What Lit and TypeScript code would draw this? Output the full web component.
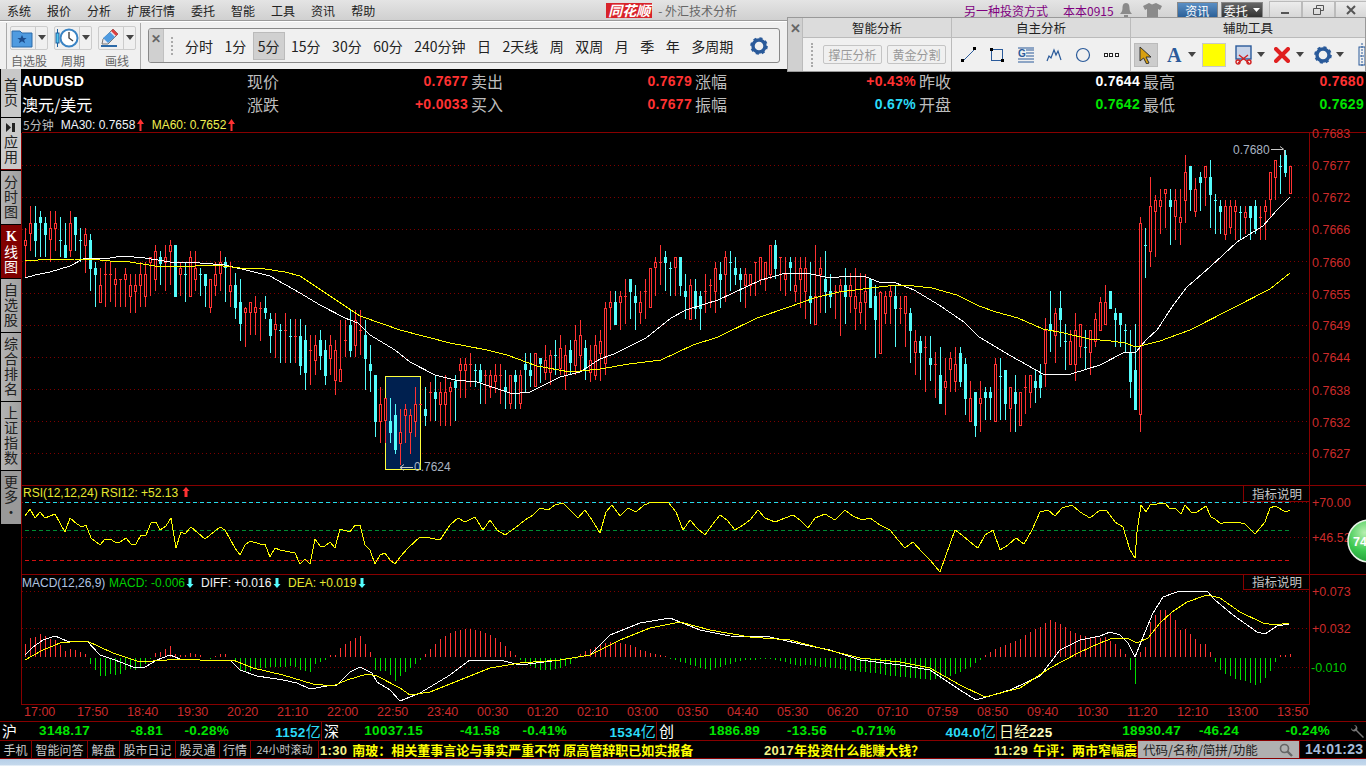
import { LitElement, css, html, svg } from 'lit';
import { customElement } from 'lit/decorators.js';

type Candle = { i: number; hi: number; lo: number; top: number; bot: number; up: boolean };

// rows are "high low bodyTop bodyBottom colour", scale 3 means read from a 3x crop
function rows(start: number, y0: number, scale: number, text: string): Candle[] {
    return text.trim().split('\n').map((line, n) => {
        const p = line.trim().split(/\s+/);
        const y = (k: number) => y0 + Number(p[k]) / scale;
        return { i: start + n, hi: y(0), lo: y(1), top: y(2), bot: y(3), up: p[4] === 'r' };
    });
}

const candles: Candle[] = [
    ...rows(0, 130, 3, `
295 445 330 345 r
228 363 280 310 r
228 380 280 330 c
243 380 262 278 c
262 380 280 312 c
243 395 295 328 r
243 362 280 295 r
262 380 330 330 c
280 380 345 380 c
243 380 280 362 r
262 362 262 312 c
295 395 330 330 c
295 430 312 345 r
312 482 330 413 c
397 532 413 430 c
413 515 465 515 r
397 532 432 432 r
397 515 432 432 r
415 532 448 464 r
448 532 448 448 r
415 532 432 446 r
432 548 465 497 r
432 548 465 482 r
397 532 432 464 r
397 532 432 497 r
380 497 380 395 r
345 482 363 446 r
363 465 380 397 c
345 482 380 395 r
330 465 345 362 r
345 497 345 497 c
397 497 413 430 r
397 515 432 432 c
363 497 380 497 r
363 482 413 446 r
413 497 432 432 c
432 532 432 465 c
448 548 448 532 r
397 497 432 464 r
363 482 397 430 r
380 515 397 413 c
397 532 465 482 r
430 566 465 532 c
448 632 517 581 c
532 650 535 548 r
515 616 517 548 r
498 616 532 548 r
515 632 535 535 r
498 566 535 548 c
550 668 568 616 c
550 683 583 598 r
583 700 600 600 c
550 700 600 600 r
567 700 618 618 c
567 700 618 618 r`),
    ...rows(55, 0, 1, `
319 375 336 365 c
325 390 340 372 c
335 385 350 350 r
335 375 345 360 r
330 370 340 355 c
340 385 350 375 c
335 375 345 358 r
340 395 350 380 r
320 381 369 381 r
320 357 340 340 r
310 357 325 350 c
310 357 320 345 r
310 355 330 330 r
320 390 335 358 c
345 392 364 370 c`),
    ...rows(70, 350, 3, `
75 262 75 212 c
112 280 162 212 r
145 280 145 212 r
145 280 212 246 c
162 312 195 297 c
178 345 246 278 r
162 280 178 195 r
178 312 195 246 r
112 262 162 212 r
162 162 162 162 r
112 228 178 195 c
95 212 127 127 r
75 212 127 145 c
95 228 127 162 r
75 228 127 162 r
95 228 112 125 r
75 212 92 110 c
25 145 42 60 r
25 145 42 60 r
10 112 42 42 r
42 112 60 60 c
42 162 60 92 c
60 162 75 75 r
60 145 75 110 r
42 128 75 92 r
42 162 75 75 r
60 178 112 125 c
75 178 75 160 r
60 178 75 92 c
60 178 75 160 r
10 125 42 58 c
10 112 60 75 c
10 112 10 110 r
25 100 25 40 c`),
    ...rows(104, 0, 1, `
345 380 360 372 r
350 385 355 372 r
340 375 355 355 c
335 375 348 368 r
345 390 355 375 r
340 375 350 362 c
325 375 340 365 r
320 370 335 355 r
340 380 348 368 c
345 382 360 372 r
335 380 345 375 r`),
    ...rows(115, 230, 3, `
300 453 333 368 r
215 435 235 400 r
183 300 217 233 r
183 283 217 283 c
183 300 198 215 r
148 283 198 198 r
148 267 148 183 c
165 300 198 215 c
183 283 217 248 r
148 267 183 183 r
113 233 115 233 r
80 198 97 113 r
45 165 97 97 r
62 183 82 97 c
97 198 115 115 c
82 198 82 113 r
82 198 82 165 c
133 267 183 198 c
148 267 165 267 r
148 267 183 233 c
183 300 198 233 c
133 250 183 183 r
148 233 165 165 r
97 250 115 183 r
97 233 133 148 c
62 217 82 133 r
62 183 97 97 c
80 165 115 133 c
115 217 133 148 c
115 233 133 165 r
133 198 133 165 r
97 198 97 97 r
82 165 82 148 r
97 183 97 148 r
45 148 45 133 r
30 148 45 115 c
82 183 82 82 r
82 198 133 148 r
82 183 97 113 c
82 217 165 183 r
82 233 115 148 r
82 267 115 183 r
97 283 198 215 c
45 283 198 283 r
82 250 115 133 r
62 250 148 183 c
133 233 183 198 c
165 267 183 183 r
148 318 165 183 r
115 283 165 198 c
130 250 165 198 r
115 300 198 233 r
130 283 217 248 r
133 300 183 215 r
148 233 148 233 c
165 383 198 267 c
183 300 185 367 r
183 283 198 248 r
165 283 183 198 r
165 350 198 233 c
198 283 233 233 r
198 350 198 250 r
233 400 250 300 c
300 435 333 367 r
318 450 333 367 c
318 485 352 352 r
318 453 383 400 c
367 503 402 402 r
350 520 435 520 c
383 555 453 470 r
367 487 385 418 r
350 487 402 452 r
350 470 368 452 c
385 555 402 503 c
453 573 505 573 r
487 622 487 587 c
453 605 505 520 r
470 570 487 503 c
470 570 487 503 c
385 573 402 573 r
385 570 437 437 c
420 570 420 520 c
470 605 472 535 r
435 605 487 520 c
487 587 487 587 r
435 553 470 470 r
435 535 435 485 r
420 520 453 470 c
402 503 435 470 c
265 470 300 400 r
183 367 283 300 c
235 400 250 317 r
183 350 235 267 c
283 420 333 333 c
300 400 333 402 r
250 453 300 402 r
283 385 283 350 r
300 420 352 352 c
300 435 300 367 r
250 350 267 333 r
200 300 217 300 r
165 283 217 283 r
183 235 183 233 c
235 350 250 267 c
250 350 250 283 c
283 367 300 300 c
300 503 367 453 c
283 537 420 537 c`),
    ...rows(223, 130, 3, `
262 906 280 852 r
295 445 345 345 c
142 412 228 362 r
195 380 211 243 r
178 312 211 228 r
178 295 178 190 r
178 345 211 228 c
178 330 211 260 r
178 345 262 278 r
75 278 127 210 r
108 243 108 178 c
145 262 178 243 r
127 243 142 158 c
108 228 108 142 r
90 295 142 192 c
192 312 211 211 c
211 312 228 243 c
211 330 228 312 r
211 312 228 292 r
211 330 228 243 r
228 330 245 245 c
228 312 245 260 r
228 330 228 260 c
211 312 228 293 c
228 330 262 262 r
211 330 228 243 r
127 262 127 208 r
90 210 90 140 r
75 192 108 108 c
60 140 75 125 c
108 192 108 190 r`),
];

const ma30 = '25,278 35,275 50,272 70,266 85,258 110,258 123,256 145,258 170,262 200,263 225,265 250,271 270,276 300,293 320,305 345,318 358,323 370,335 395,350 410,362 435,375 455,380 477,382 510,393 520,393 530,392 540,387 560,377 580,372 600,359 614,354 646,338 671,318 686,310 718,300 761,280 786,273 807,273 829,278 850,276 866,277 879,282 896,283 914,290 939,305 964,322 979,337 1011,356 1043,374 1071,374 1100,365 1125,352 1136,352 1146,340 1157,330 1172,307 1187,287 1210,267 1237,242 1263,226 1277,210 1290,197';
const ma60 = '25,261 38,260 75,259 90,259 110,261 130,262 155,266 175,267 215,265 240,268 265,269 285,272 300,276 330,296 360,316 400,330 450,343 487,350 507,355 537,366 570,372 600,369 629,364 661,360 693,345 718,337 757,318 789,307 814,298 839,292 871,288 896,285 914,286 932,288 957,295 979,306 996,312 1018,318 1043,329 1064,333 1089,339 1111,341 1125,343 1136,347 1160,341 1190,330 1233,308 1270,289 1290,273';
const rsi = '25,516 30,509 35,518 40,512 45,518 55,514 65,532 70,518 77,524 82,527 86,525 91,538 100,545 105,539 110,539 115,542 120,542 126,538 131,544 136,544 141,535 146,535 151,523 156,522 160,530 166,526 171,518 176,548 181,532 185,534 191,527 205,539 220,527 225,530 235,548 240,555 245,545 250,541 260,544 265,544 270,557 275,548 280,550 295,553 300,564 305,559 310,564 315,539 320,546 325,546 330,542 335,548 340,529 350,532 355,525 360,525 365,545 370,550 375,564 380,555 385,553 390,560 395,564 400,557 408,548 420,537 430,538 440,540 450,525 458,518 465,522 475,517 483,530 490,520 497,530 505,535 515,528 525,520 533,515 540,508 548,510 555,505 563,503 570,510 578,518 585,510 592,520 600,533 606,512 612,505 620,516 628,508 636,512 644,505 652,502 668,502 676,512 683,530 690,520 697,528 705,535 712,525 720,515 727,520 735,530 743,525 750,520 758,510 765,518 775,522 785,518 793,515 800,520 808,528 815,518 825,514 835,520 845,510 853,516 862,520 870,518 880,525 890,530 898,540 905,548 913,542 922,552 930,560 940,572 946,555 955,530 962,535 970,542 978,548 985,535 993,530 1000,550 1008,545 1016,538 1024,544 1032,530 1040,512 1048,510 1055,516 1062,508 1072,505 1080,512 1090,518 1100,510 1107,511 1115,522 1123,527 1130,550 1135,558 1137,532 1141,505 1146,512 1150,505 1165,503 1170,509 1175,508 1181,514 1185,505 1191,512 1197,512 1206,506 1211,517 1215,519 1221,524 1225,522 1237,522 1245,524 1255,534 1265,522 1270,508 1275,506 1286,512 1290,510';
const diff = '25,655 33,647 43,640 55,636 67,641 78,641 87,641 100,655 115,660 133,667 145,667 157,660 170,655 180,659 193,659 207,661 230,660 240,670 257,676 283,680 297,683 310,689 327,686 337,685 350,672 360,667 372,673 377,682 390,690 400,701 420,693 450,675 470,660 500,660 520,665 560,660 590,655 610,635 640,623 670,618 700,630 730,636 770,637 800,644 830,650 860,660 900,665 930,670 960,690 976,700 1010,690 1040,676 1060,650 1080,640 1100,636 1110,632 1120,635 1128,643 1135,657 1143,637 1153,613 1163,597 1177,592 1183,591 1207,591 1215,600 1233,615 1257,632 1265,634 1277,626 1289,624';
const dea = '25,660 43,650 60,643 80,641 87,641 113,653 140,662 167,660 187,659 213,661 233,660 253,668 283,675 313,684 333,686 347,680 367,674 377,676 400,688 410,695 430,692 460,680 490,668 520,663 560,660 590,655 620,640 650,628 680,622 710,630 750,637 790,640 820,648 860,658 900,662 930,668 960,685 985,697 1020,688 1050,668 1080,652 1100,643 1113,638 1127,638 1137,643 1148,638 1160,623 1172,612 1187,602 1207,595 1220,598 1240,612 1263,623 1275,625 1289,623';

// macd bars, [x, height above the baseline] and linear in between
const barKeys = [[25,13],[30,19],[35,20],[40,23],[45,21],[50,18],[55,17],[60,12],[65,6],[70,8],[75,7],[80,5],[85,3],[89,1],[90,-6],[95,-12],[100,-18],[105,-18],[110,-16],[115,-17],[120,-16],[125,-12],[130,-11],[135,-12],[140,-9],[145,-6],[150,-1],[155,4],[160,5],[165,8],[170,11],[175,3],[180,2],[185,2],[190,4],[195,3],[200,2],[205,0],[210,-1],[220,3],[225,3],[230,0],[235,-4],[240,-13],[245,-14],[250,-13],[255,-10],[285,-9],[290,-8],[295,-9],[300,-12],[305,-13],[310,-14],[315,-6],[320,-4],[325,-2],[330,2],[335,2],[340,9],[345,13],[350,16],[355,19],[360,21],[365,13],[370,5],[375,-12],[380,-13],[385,-13],[390,-17],[395,-23],[400,-18],[410,-10],[420,-2],[430,8],[440,18],[450,24],[460,27],[470,28],[480,26],[490,22],[500,15],[510,6],[520,-2],[530,-8],[540,-12],[550,-12],[560,-10],[570,-6],[580,3],[590,8],[600,12],[610,15],[620,14],[630,12],[640,7],[650,4],[660,2],[670,-1],[680,-4],[690,-7],[700,-10],[710,-12],[720,-9],[730,-6],[740,-3],[750,-2],[770,-1],[780,-3],[790,-6],[800,-8],[810,-7],[820,-9],[830,-10],[840,-11],[850,-13],[860,-14],[870,-15],[880,-16],[890,-18],[900,-19],[910,-20],[920,-21],[930,-22],[940,-21],[950,-18],[960,-14],[970,-9],[980,-2],[990,5],[1000,10],[1010,14],[1020,18],[1030,25],[1040,30],[1050,37],[1060,33],[1070,26],[1080,22],[1090,20],[1100,19],[1105,20],[1110,16],[1115,13],[1120,8],[1125,3],[1130,-12],[1135,-26],[1140,5],[1145,10],[1150,35],[1155,42],[1160,47],[1165,47],[1170,43],[1175,37],[1180,27],[1185,28],[1190,23],[1195,18],[1200,13],[1205,13],[1210,5],[1215,-4],[1220,-12],[1225,-16],[1230,-18],[1235,-21],[1240,-22],[1245,-23],[1250,-25],[1255,-27],[1260,-25],[1265,-20],[1270,-13],[1275,-4],[1280,2],[1285,2],[1290,3]];

function barAt(x: number) {
    for (let k = 1; k < barKeys.length; k++) {
        const [x0, v0] = barKeys[k - 1];
        const [x1, v1] = barKeys[k];
        if (x <= x1) return v0 + ((v1 - v0) * (x - x0)) / (x1 - x0);
    }
    return 0;
}

const RED = '#ff3232';
const CYAN = '#54fcfc';
const arrow = (x: number, y: number, color: string, up: boolean) => svg`
    <path d=${up ? `M${x} ${y - 6}l3.5 4h-2v6h-3v-6h-2z` : `M${x} ${y + 5}l3.5 -4h-2v-6h-3v6h-2z`} fill=${color}></path>`;

const priceAxis = [['0.7683', 133], ['0.7677', 165], ['0.7672', 197], ['0.7666', 229], ['0.7660', 262], ['0.7655', 294], ['0.7649', 325], ['0.7644', 357], ['0.7638', 390], ['0.7632', 422], ['0.7627', 453]] as const;
const grid = [165, 197, 229, 261, 293, 325, 357, 389, 421, 453, 502, 537, 591, 628, 667];

@customElement('kline-chart')
export class KlineChart extends LitElement {
    static override styles = css`
        :host { display: block; height: 572px; }
        svg { display: block; overflow: visible; }
        text { font-family: "Liberation Sans", Arial, sans-serif; font-size: 12px; }
        .axis { font-size: 12.5px; fill: #cc2b2b; }
        .note { fill: #a9b4c2; }
        .cjk { font-family: "Noto Sans CJK SC", sans-serif; fill: #c4c4c4; font-size: 12.5px; }
        .crisp { shape-rendering: crispEdges; }
        .grid { stroke: #7d0000; stroke-dasharray: 1 3; }
        .frame { stroke: #870000; fill: none; }
        .line { fill: none; shape-rendering: crispEdges; }
        .badge { font-size: 12.5px; font-weight: 700; fill: #fff; }
    `;

    private candle(c: Candle) {
        const x = 25 + c.i * 5 + 0.5;
        const color = c.up ? RED : CYAN;
        const flat = c.bot - c.top < 1;
        const top = Math.round(c.top) + 0.5;
        const h = Math.max(Math.round(c.bot - c.top), 1);
        return svg`
            <line x1=${x} x2=${x} y1=${Math.round(c.hi)} y2=${Math.round(c.lo)} stroke=${color}></line>
            ${flat
                ? svg`<line x1=${x - 1.5} x2=${x + 1.5} y1=${top} y2=${top} stroke=${color}></line>`
                : svg`<rect x=${x - 1} y=${top} width="2" height=${h} stroke=${color} fill=${c.up ? '#000' : CYAN}></rect>`}`;
    }

    private bars() {
        const out = [];
        for (let x = 25; x <= 1290; x += 5) {
            const v = Math.round(barAt(x));
            if (v === 0) continue;
            out.push(svg`<line x1=${x + 0.5} x2=${x + 0.5} y1=${v > 0 ? 657 - v : 658} y2=${v > 0 ? 657 : 658 - v} stroke=${v > 0 ? RED : '#00e000'}></line>`);
        }
        return out;
    }

    override render() {
        return html`
        <svg width="1345" height="572" viewBox="21 132 1345 572">
            <defs>
                <radialGradient id="ball" cx="0.4" cy="0.3" r="0.8">
                    <stop offset="0" stop-color="#b8f0b0"></stop>
                    <stop offset="0.55" stop-color="#3cc850"></stop>
                    <stop offset="1" stop-color="#1d8f34"></stop>
                </radialGradient>
            </defs>
            <g class="crisp">
                ${grid.map((y) => svg`<line class="grid" x1="22" x2="1309" y1=${y + 0.5} y2=${y + 0.5}></line>`)}
                <path class="frame" d="M21.5 132.5H1366M21.5 132.5V704.5M1309.5 132.5V704.5M21.5 485.5H1366M21.5 574.5H1366M21.5 704.5H1309.5"></path>
                <line x1="25" x2="1291" y1="502.5" y2="502.5" stroke="#26d8e8" stroke-dasharray="4 3"></line>
                <line x1="25" x2="1291" y1="530.5" y2="530.5" stroke="#008c32" stroke-dasharray="4 3"></line>
                <line x1="25" x2="1291" y1="560.5" y2="560.5" stroke="#d01010" stroke-dasharray="4 3"></line>
                <rect x="385.5" y="376.5" width="35" height="93" fill="#00204f" stroke="#ffff3c"></rect>
                ${candles.map((c) => this.candle(c))}
                ${this.bars()}
            </g>
            <polyline class="line" points=${ma30} stroke="#fff" stroke-width="1"></polyline>
            <polyline class="line" points=${ma60} stroke="#ffff00" stroke-width="1"></polyline>
            <polyline class="line" points=${rsi} stroke="#ffff00" stroke-width="1"></polyline>
            <polyline class="line" points=${diff} stroke="#fff" stroke-width="1"></polyline>
            <polyline class="line" points=${dea} stroke="#ffff00" stroke-width="1"></polyline>

            ${priceAxis.map(([t, y]) => svg`<text class="axis" x="1312" y=${y + 5}>${t}</text>`)}
            <text class="axis" x="1312" y="507">+70.00</text>
            <text class="axis" x="1312" y="542">+46.52</text>
            <text class="axis" x="1312" y="596">+0.073</text>
            <text class="axis" x="1312" y="633">+0.032</text>
            <text class="axis" x="1311" y="672" style="fill:#00c800">-0.010</text>

            <text class="note" x="1233" y="154">0.7680</text>
            <path d="M1271 149.5H1283M1280 146.5l4 3M1284.5 150V156" stroke="#c8c8c8" fill="none"></path>
            <path d="M400 467.5H413M400 467.5l4 -3M400 467.5l4 3" stroke="#c8c8c8" fill="none"></path>
            <text class="note" x="414" y="471">0.7624</text>

            <text x="23" y="497" fill="#e8e830">RSI(12,12,24) RSI12: +52.13</text>
            ${arrow(186, 493, RED, true)}
            <text x="22" y="587" fill="#b0c4e0">MACD(12,26,9)</text>
            <text x="109" y="587" fill="#00d000">MACD: -0.006</text>
            ${arrow(190, 583, CYAN, false)}
            <text x="201" y="587" fill="#f4f4f4">DIFF: +0.016</text>
            ${arrow(277, 583, CYAN, false)}
            <text x="288" y="587" fill="#e8e830">DEA: +0.019</text>
            ${arrow(362, 583, CYAN, false)}

            <g class="crisp">
                <path class="frame" d="M1243.5 485.5V501.5H1309M1243.5 574.5V589.5H1309"></path>
            </g>
            <text class="cjk" x="1252" y="498.5">指标说明</text>
            <text class="cjk" x="1252" y="587">指标说明</text>

            <circle cx="1369" cy="541" r="21" fill="url(#ball)" stroke="#e8f4e8" stroke-width="1.5"></circle>
            <text class="badge" x="1353" y="546">74</text>
        </svg>
        `;
    }
}

const gear = (color: string) => html`
    <svg class="ico" width="18" height="18" viewBox="0 0 18 18">
        <circle cx="9" cy="9" r="6" fill="none" stroke=${color} stroke-width="3.4"></circle>
        <circle cx="9" cy="9" r="7.6" fill="none" stroke=${color} stroke-width="2.4" stroke-dasharray="3 3"></circle>
    </svg>`;
const caret = html`<svg class="ico" width="8" height="5" viewBox="0 0 8 5"><path d="M0 0h8l-4 5z" fill="#444"></path></svg>`;

const periods = ['分时', '1分', '5分', '15分', '30分', '60分', '240分钟', '日', '2天线', '周', '双周', '月', '季', '年', '多周期'];
const times = '17:00 17:50 18:40 19:30 20:20 21:10 22:00 22:50 23:40 00:30 01:20 02:10 03:00 03:50 04:40 05:30 06:20 07:10 07:59 08:50 09:40 10:30 11:20 12:10 13:00 13:50'.split(' ');

@customElement('app-root')
export class AppRoot extends LitElement {
    static override styles = css`
        :host {
            display: block;
            position: relative;
            width: 1366px;
            height: 767px;
            overflow: hidden;
            background: #000;
            font-family: "Noto Sans CJK SC", "Liberation Sans", sans-serif;
        }
        .ico { display: block; flex: none; }

        .menu {
            display: flex;
            align-items: center;
            height: 20px;
            padding-left: 7px;
            gap: 16px;
            font-size: 12px;
            color: #222;
            white-space: nowrap;
            background: linear-gradient(#e4e4e4, #d0d0d0);
            border-bottom: 1px solid #9a9a9a;
        }
        .menu > * { flex: none; }
        .logo {
            margin-left: 215px;
            padding: 0 2px;
            background: #d8232a;
            color: #fff;
            font-weight: 700;
            font-style: italic;
            font-size: 14px;
            line-height: 15px;
        }
        .app-title { margin-left: -10px; color: #666; }
        .promo { color: #800080; margin-left: 211px; }
        .account { color: #800080; margin-left: -1px; }
        .menu .bell { margin-left: -12px; }
        .menu .shirt { margin-left: -7px; }
        .news-btn, .trade-btn {
            display: flex;
            align-items: center;
            justify-content: center;
            gap: 5px;
            height: 16px;
            color: #fff;
            box-sizing: border-box;
            border: 1px solid #888;
        }
        .news-btn { width: 41px; background: linear-gradient(#5b8fc4, #2b6098); margin-left: -1px; }
        .trade-btn { width: 42px; background: linear-gradient(#666, #333); margin-left: -13px; }
        .win { display: flex; margin-left: -10px; }
        .win div {
            display: flex;
            align-items: center;
            justify-content: center;
            width: 31px;
            height: 17px;
            border: 1px solid #bbb;
            background: linear-gradient(#ececec, #d4d4d4);
        }

        .toolbar {
            display: flex;
            align-items: center;
            height: 48px;
            background: #f0f0f0;
            border-top: 1px solid #fff;
            box-sizing: border-box;
        }
        .tools {
            display: flex;
            width: 135px;
            height: 46px;
            margin-left: 6px;
            padding-left: 3px;
            gap: 6px;
            border-left: 1px solid #aaa;
            border-right: 1px solid #aaa;
            box-sizing: border-box;
        }
        .tool { display: flex; flex-direction: column; align-items: center; width: 38px; font-size: 12px; color: #666; line-height: 15px; white-space: nowrap; }
        .tool-btn {
            display: flex;
            align-items: center;
            justify-content: space-between;
            width: 38px;
            height: 24px;
            margin: 3px 0 3px;
            box-sizing: border-box;
            border: 1px solid #ccc;
            border-radius: 2px;
        }
        .tool-btn .drop { display: flex; align-items: center; justify-content: center; width: 12px; height: 100%; border-left: 1px solid #ccc; flex: none; box-sizing: border-box; }

        .periods {
            display: flex;
            align-items: center;
            width: 632px;
            height: 35px;
            margin-left: 7px;
            box-sizing: border-box;
            border: 1px solid #888;
            border-radius: 3px;
            font-size: 14px;
            color: #222;
            overflow: hidden;
        }
        .close-strip {
            display: flex;
            justify-content: center;
            width: 14px;
            height: 100%;
            background: #d0d0d0;
            color: #666;
            font-size: 12px;
            font-weight: 700;
            flex: none;
            border-right: 1px solid #c0c0c0;
        }
        .grip { width: 3px; height: 18px; margin: 0 9px 0 7px; border-left: 2px dotted #aaa; flex: none; }
        .periods ul { display: flex; align-items: center; gap: 11.5px; margin: 0; padding: 0; list-style: none; white-space: nowrap; }
        .periods li.on { background: #d0d0d0; outline: 1px solid #bbb; padding: 3px 4px; margin: 0 -4px; }
        .periods .cfg { margin-left: 17px; }

        .float {
            position: absolute;
            left: 787px;
            top: 17px;
            width: 579px;
            height: 55px;
            display: flex;
            background: #f0f0f0;
            border: 1px solid #999;
            box-sizing: border-box;
            color: #222;
        }
        .float .close-strip { height: 100%; font-size: 13px; border-right: 1px solid #bbb; }
        .sec { display: flex; flex-direction: column; border-right: 1px solid #bbb; box-sizing: border-box; }
        .sec.smart { width: 149px; }
        .sec.own { width: 179px; }
        .sec.aux { flex: 1; border-right: 0; overflow: hidden; }
        .sec h4 {
            margin: 0;
            height: 20px;
            line-height: 19px;
            text-align: center;
            font-weight: 400;
            font-size: 12.5px;
            background: #dcdcdc;
            border-bottom: 1px solid #bbb;
            box-sizing: border-box;
        }
        .sec .row { display: flex; align-items: center; flex: 1; }
        .sec.smart .row .grip { margin: 0 7px 0 8px; height: 24px; }
        .ghost {
            width: 59px;
            height: 19px;
            margin-right: 5px;
            line-height: 18px;
            text-align: center;
            box-sizing: border-box;
            border: 1px solid #c4c4c4;
            border-radius: 2px;
            font-size: 12px;
            color: #999;
            flex: none;
        }
        .sec.own .row { justify-content: space-between; padding: 0 11px 0 9px; }
        .sec.aux .row { padding-left: 3px; }
        .pick { width: 24px; height: 24px; display: flex; align-items: center; justify-content: center; background: #ccc; border: 1px solid #bbb; box-sizing: border-box; flex: none; }
        .swatch { width: 24px; height: 24px; background: #ff0; border: 1px solid #c8c8c8; box-sizing: border-box; flex: none; }
        .glyph-a { font-family: "Liberation Serif", serif; font-size: 20px; font-weight: 700; color: #2a5a9a; width: 16px; line-height: 20px; flex: none; }
        .aux-a { margin-left: 9px; }
        .gap-a { margin: 0 6px 0 5px; }
        .gap-cut { margin-left: 9px; }
        .gap-b { margin: 0 9px 0 4px; }
        .gap-x { margin: 0 10px 0 6px; }
        .gap-g { margin: 0 14px 0 4px; }

        .body { display: flex; height: 635px; }
        .side { width: 21px; display: flex; flex-direction: column; gap: 1px; flex: none; align-items: flex-end; }
        .tab {
            display: flex;
            flex-direction: column;
            align-items: center;
            justify-content: center;
            width: 20px;
            height: 53px;
            box-sizing: border-box;
            font-size: 14px;
            color: #222;
            background: linear-gradient(90deg, #b4b4b4, #a0a0a0);
            flex: none;
        }
        .tab span {
            writing-mode: vertical-rl;
            text-orientation: upright;
            letter-spacing: 1px;
            line-height: 20px;
        }
        .tab.home { height: 48px; background: #c8c8c8; }
        .tab.apps { height: 52px; background: #cacaca; gap: 3px; border-bottom: 1px solid #870000; }
        .tab.tall { height: 68px; }
        .tab.active { background: #800000; color: #fff; }
        .tab.active b { font-family: "Liberation Serif", serif; }
        .tab.more { background: #999; justify-content: flex-start; padding-top: 4px; }
        .main { flex: 1; min-width: 0; }

        .quotes {
            display: grid;
            grid-template-columns: 225px repeat(5, 224px);
            grid-auto-rows: 23.5px;
            height: 48px;
            padding-left: 1px;
            align-items: center;
            font-size: 16px;
            color: #bdbdbd;
        }
        .name { color: #fff; white-space: nowrap; }
        .name.code { font: 700 14px "Liberation Sans", sans-serif; letter-spacing: .4px; }
        .cell { display: flex; justify-content: space-between; padding-right: 3px; line-height: 22px; }
        .cell b { font: 700 14px/22px "Liberation Sans", sans-serif; letter-spacing: .3px; }
        .r { color: #ff3232; }
        .g { color: #00e600; }
        .w { color: #fff; }
        .c { color: #2bdcf8; }

        .legend { display: flex; align-items: center; height: 15px; padding-left: 2px; font-size: 12px; color: #bdbdbd; }
        .legend .m {
            display: flex;
            align-items: center;
            gap: 1px;
            font-family: "Liberation Sans", sans-serif;
        }
        .legend .m.m30 { margin-left: 7px; color: #f0f4fa; width: 91px; }
        .legend .m.m60 { color: #f0f050; }

        .times { display: flex; height: 17px; padding-left: 24px; font: 12.5px/17px "Liberation Sans", sans-serif; color: #cc2b2b; }
        .times span { width: 50px; flex: none; }
        .times span:first-child { width: 53px; }

        .index {
            display: flex;
            height: 20px;
            box-sizing: border-box;
            border-top: 1px solid #870000;
            border-bottom: 1px solid #870000;
            font-size: 15px;
            line-height: 18px;
        }
        .mk { display: grid; text-align: right; border-right: 1px solid #870000; box-sizing: border-box; white-space: nowrap; }
        .mk b { font: 700 13.5px/18px "Liberation Sans", sans-serif; letter-spacing: .3px; }
        .mk .n { text-align: left; color: #fff; padding-left: 2px; }
        .mk .n.nk { color: #ffffc0; }
        .mk.s1 { width: 322px; grid-template-columns: 24px 66px 73px 66px 92px; }
        .mk.s2 { width: 335px; grid-template-columns: 30px 71px 77px 67px 89px; }
        .mk.s3 { width: 340px; grid-template-columns: 30px 73px 67px 69px 100px; }
        .mk.s4 { flex: 1; border-right: 0; grid-template-columns: 60px 124px 58px 91px 36px; }
        .mk .yen { font: 400 15px/18px "Noto Sans CJK SC", sans-serif; }
        .mk .tool-ic { display: flex; justify-content: flex-end; align-items: center; }

        .tabs { display: flex; height: 18px; border-bottom: 1px solid #870000; box-sizing: border-box; font-size: 12px; color: #c8c8c8; line-height: 17px; white-space: nowrap; }
        .tabs > span { padding: 0 2px; border-right: 1px solid #870000; box-sizing: border-box; flex: none; text-align: center; }
        .tabs > span.w32 { width: 32px; }
        .tabs > span.w56 { width: 56px; }
        .tabs > span.w44 { width: 44px; }
        .tabs > span.w31 { width: 31px; }
        .tabs > span.w68 { width: 68px; font-size: 11px; }
        .ticker { display: flex; width: 818px; overflow: hidden; color: #ffff00; font-weight: 700; font-size: 13px; padding-left: 1px; box-sizing: border-box; flex: none; }
        .ticker span { flex: none; }
        .ticker .t1 { width: 444px; }
        .ticker .t2 { width: 230px; }
        .ticker i { font: 700 13px/17px "Liberation Sans", sans-serif; color: #f4f488; letter-spacing: .3px; }
        .ticker i.stamp { margin-right: 5px; }
        .search {
            display: flex;
            align-items: center;
            justify-content: space-between;
            width: 163px;
            padding: 0 6px 0 5px;
            background: #b0b0b0;
            box-sizing: border-box;
            color: #222;
            font-size: 12.5px;
            border-left: 1px solid #870000;
            border-right: 1px solid #870000;
            flex: none;
        }
        .clock { flex: 1; padding-left: 5px; font: 700 14px/17px "Liberation Sans", sans-serif; letter-spacing: .3px; color: #a8bcd8; }
        .strip { height: 8px; background: linear-gradient(#b6cfe8 0, #c4d8ec 6px, #fff 7px); }
    `;

    private renderTools() {
        return html`
        <div class="tools">
            <div class="tool">
                <div class="tool-btn">
                    <svg class="ico" width="22" height="20" viewBox="0 0 22 20">
                        <path d="M1 3h8l2 2h10v14H1z" fill="#4f9be0" stroke="#2c6aa8"></path>
                        <path d="M11 7l1.4 3h3.2l-2.5 2 1 3.2-3.100-1.900-3.100 1.900 1-3.200-2.500-2h3.200z" fill="#1c4c8c"></path>
                    </svg>
                    <span class="drop">${caret}</span>
                </div>
                自选股
            </div>
            <div class="tool">
                <div class="tool-btn">
                    <svg class="ico" width="24" height="20" viewBox="0 0 24 20">
                        <rect x="1" y="5" width="3" height="10" fill="#54c8f0" stroke="#1c5c9c"></rect>
                        <path d="M2.500 1v4M2.500 15v4" stroke="#1c5c9c"></path>
                        <circle cx="14" cy="10" r="8.500" fill="#fff" stroke="#3a84c4" stroke-width="2"></circle>
                        <path d="M14 4v6l4 3" fill="none" stroke="#444" stroke-width="1.400"></path>
                    </svg>
                    <span class="drop">${caret}</span>
                </div>
                周期
            </div>
            <div class="tool">
                <div class="tool-btn">
                    <svg class="ico" width="20" height="20" viewBox="0 0 20 20">
                        <path d="M2 18h16" stroke="#2c6aa8" stroke-width="2"></path>
                        <path d="M3 16l1-5L14 1l5 5L9 16z" fill="#e8e8f0" stroke="#777"></path>
                        <path d="M14 1l5 5-2 2-5-5z" fill="#e04040"></path>
                        <path d="M11 4l5 5-7 6-5-5z" fill="#4f9be0"></path>
                    </svg>
                    <span class="drop">${caret}</span>
                </div>
                画线
            </div>
        </div>`;
    }

    private renderFloat() {
        return html`
        <div class="float">
            <div class="close-strip">✕</div>
            <div class="sec smart">
                <h4>智能分析</h4>
                <div class="row"><i class="grip"></i><span class="ghost">撑压分析</span><span class="ghost">黄金分割</span></div>
            </div>
            <div class="sec own">
                <h4>自主分析</h4>
                <div class="row">
                    <svg width="16" height="16" viewBox="0 0 16 16" shape-rendering="crispEdges"><path d="M2 14L14 2" stroke="#2a5a9a" shape-rendering="auto"></path><path d="M0 12h3v3H0zM12 0h3v3h-3z"></path></svg>
                    <svg width="16" height="16" viewBox="0 0 16 16" shape-rendering="crispEdges"><rect x="2.500" y="2.500" width="11" height="11" fill="none" stroke="#2a5a9a" stroke-width="1.400"></rect><path d="M1 1h3v3H1zM12 12h3v3h-3z"></path></svg>
                    <svg width="16" height="16" viewBox="0 0 16 16"><path d="M8 3h8M8 6h8M8 9h8M0 12h16M0 15h16M0 1h16" stroke="#2a5a9a"></path><text x="0" y="10" font-size="10" font-weight="700" fill="#2a5a9a" font-family="Liberation Sans">G</text></svg>
                    <svg width="16" height="16" viewBox="0 0 16 16"><path d="M1 14l2-5 2 2 3-8 2 5 2-4 3 9" fill="none" stroke="#2a5a9a" stroke-width="1.200"></path></svg>
                    <svg width="16" height="16" viewBox="0 0 16 16"><circle cx="8" cy="8" r="6.500" fill="none" stroke="#2a5a9a" stroke-width="1.200"></circle></svg>
                    <svg width="16" height="16" viewBox="0 0 16 16" shape-rendering="crispEdges"><path d="M1 6.500h3v3H1zM6.500 6.500h3v3h-3zM12 6.500h3v3h-3z" fill="#fff" stroke="#222"></path></svg>
                </div>
            </div>
            <div class="sec aux">
                <h4>辅助工具</h4>
                <div class="row">
                    <div class="pick"><svg width="14" height="18" viewBox="0 0 14 18"><path d="M1 1l11 10H7l3 6-2.400 1-3-6L1 15z" fill="#d8a010" stroke="#333"></path></svg></div>
                    <span class="glyph-a aux-a">A</span>
                    <span class="gap-a">${caret}</span>
                    <div class="swatch"></div>
                    <svg class="ico gap-cut" width="18" height="20" viewBox="0 0 18 20"><rect x="1" y="1" width="15" height="13" fill="#c8d4e8" stroke="#2a5a9a" stroke-width="1.400"></rect><path d="M3 18l10-8M14 18L4 10" stroke="#d02020" stroke-width="1.400"></path><circle cx="3" cy="17" r="2" fill="none" stroke="#d02020" stroke-width="1.400"></circle><circle cx="14" cy="17" r="2" fill="none" stroke="#d02020" stroke-width="1.400"></circle></svg>
                    <span class="gap-b">${caret}</span>
                    <svg class="ico" width="16" height="16" viewBox="0 0 16 16"><path d="M2 2l12 12M14 2L2 14" stroke="#e02020" stroke-width="4" stroke-linecap="round"></path></svg>
                    <span class="gap-x">${caret}</span>
                    ${gear('#2a5a9a')}
                    <span class="gap-g">${caret}</span>
                    <svg class="ico" width="16" height="24" viewBox="0 0 16 24"><rect x="1" y="4" width="6" height="18" fill="none" stroke="#2a5a9a"></rect><path d="M4 0v24M2 13h4" stroke="#2a5a9a" stroke-dasharray="2 1"></path></svg>
                </div>
            </div>
        </div>`;
    }

    override render() {
        return html`
        <div class="menu">
            ${['系统', '报价', '分析', '扩展行情', '委托', '智能', '工具', '资讯', '帮助'].map((m) => html`<span>${m}</span>`)}
            <span class="logo">同花顺</span>
            <span class="app-title">- 外汇技术分析</span>
            <span class="promo">另一种投资方式</span>
            <span class="account">本本0915</span>
            <svg class="ico bell" width="16" height="16" viewBox="0 0 16 16"><path d="M8 1c-3 0-3.500 3-3.500 5 0 3-1 4.500-2.500 6h12c-1.500-1.500-2.500-3-2.500-6 0-2-.5-5-3.500-5zM6 13h4v2H6z" fill="#8a8a8a"></path></svg>
            <svg class="ico shirt" width="19" height="16" viewBox="0 0 19 16"><path d="M6 1l3 1.500L13 1l6 3-2 4-2-1v8H4V7L2 8 0 4z" fill="#8a8a8a"></path></svg>
            <span class="news-btn">资讯</span>
            <span class="trade-btn">委托<svg class="ico" width="7" height="4" viewBox="0 0 7 4"><path d="M0 0h7L3.500 4z" fill="#fff"></path></svg></span>
            <div class="win">
                <div><svg width="10" height="10" viewBox="0 0 10 10"><path d="M1 8h8" stroke="#555" stroke-width="2"></path></svg></div>
                <div><svg width="11" height="10" viewBox="0 0 11 10" fill="none" stroke="#555"><path d="M3.500 3V.5h7v5H8M.5 3.500h7v6h-7z"></path></svg></div>
                <div><svg width="10" height="10" viewBox="0 0 10 10"><path d="M1 1l8 8M9 1L1 9" stroke="#555" stroke-width="2"></path></svg></div>
            </div>
        </div>
        <div class="toolbar">
            ${this.renderTools()}
            <div class="periods">
                <div class="close-strip">✕</div>
                <i class="grip"></i>
                <ul>
                    ${periods.map((p) => html`<li class=${p === '5分' ? 'on' : ''}>${p}</li>`)}
                </ul>
                <span class="cfg">${gear('#2a5a9a')}</span>
            </div>
        </div>
        ${this.renderFloat()}
        <div class="body">
            <div class="side">
                <div class="tab home"><span>首页</span></div>
                <div class="tab apps">
                    <svg class="ico" width="10" height="9" viewBox="0 0 10 9"><path d="M0 0l5 4.500L0 9zM6 0h3v9H6z" fill="#222"></path></svg>
                    <span>应用</span>
                </div>
                <div class="tab"><span>分时图</span></div>
                <div class="tab active"><span><b>K</b>线图</span></div>
                <div class="tab"><span>自选股</span></div>
                <div class="tab tall"><span>综合排名</span></div>
                <div class="tab tall"><span>上证指数</span></div>
                <div class="tab more"><span>更多·</span></div>
            </div>
            <div class="main">
                <div class="quotes">
                    <span class="name code">AUDUSD</span>
                    <span class="cell">现价<b class="r">0.7677</b></span>
                    <span class="cell">卖出<b class="r">0.7679</b></span>
                    <span class="cell">涨幅<b class="r">+0.43%</b></span>
                    <span class="cell">昨收<b class="w">0.7644</b></span>
                    <span class="cell">最高<b class="r">0.7680</b></span>
                    <span class="name">澳元/美元</span>
                    <span class="cell">涨跌<b class="r">+0.0033</b></span>
                    <span class="cell">买入<b class="r">0.7677</b></span>
                    <span class="cell">振幅<b class="c">0.67%</b></span>
                    <span class="cell">开盘<b class="g">0.7642</b></span>
                    <span class="cell">最低<b class="g">0.7629</b></span>
                </div>
                <div class="legend">
                    5分钟
                    <span class="m m30">MA30: 0.7658<svg width="9" height="12" viewBox="0 0 9 12"><path d="M4.500 0L8 5H5.500v7h-2V5H1z" fill="#ff3232"></path></svg></span>
                    <span class="m m60">MA60: 0.7652<svg width="9" height="12" viewBox="0 0 9 12"><path d="M4.500 0L8 5H5.500v7h-2V5H1z" fill="#ff3232"></path></svg></span>
                </div>
                <kline-chart></kline-chart>
            </div>
        </div>
        <div class="times">${times.map((t) => html`<span>${t}</span>`)}</div>
        <div class="index">
            <div class="mk s1"><span class="n">沪</span><b class="g">3148.17</b><b class="g">-8.81</b><b class="g">-0.28%</b><b class="c">1152<span class="yen">亿</span></b></div>
            <div class="mk s2"><span class="n">深</span><b class="g">10037.15</b><b class="g">-41.58</b><b class="g">-0.41%</b><b class="c">1534<span class="yen">亿</span></b></div>
            <div class="mk s3"><span class="n">创</span><b class="g">1886.89</b><b class="g">-13.56</b><b class="g">-0.71%</b><b class="c">404.0<span class="yen">亿</span></b></div>
            <div class="mk s4"><span class="n nk">日经<b>225</b></span><b class="g">18930.47</b><b class="g">-46.24</b><b class="g">-0.24%</b>
                <span class="tool-ic"><svg width="16" height="16" viewBox="0 0 16 16"><path d="M14 13L7 6c1-2 0-5-3-5l2 2-1 2-2 1-2-2c0 3 3 4 5 3l7 7z" fill="#777"></path></svg></span>
            </div>
        </div>
        <div class="tabs">
            <span class="w32">手机</span>
            <span class="w56">智能问答</span>
            <span class="w32">解盘</span>
            <span class="w56">股市日记</span>
            <span class="w44">股灵通</span>
            <span class="w31">行情</span>
            <span class="w68">24小时滚动</span>
            <div class="ticker">
                <span class="t1"><i class="stamp">1:30</i>南玻：相关董事言论与事实严重不符 原高管辞职已如实报备</span>
                <span class="t2"><i>2017</i>年投资什么能赚大钱？</span>
                <span><i class="stamp">11:29</i>午评：两市窄幅震</span>
            </div>
            <div class="search">代码/名称/简拼/功能
                <svg width="14" height="14" viewBox="0 0 14 14"><circle cx="5.500" cy="5.500" r="4" fill="none" stroke="#666" stroke-width="1.600"></circle><path d="M8.500 8.500L13 13" stroke="#666" stroke-width="2.400"></path></svg>
            </div>
            <div class="clock">14:01:23</div>
        </div>
        <div class="strip"></div>
        `;
    }
}
